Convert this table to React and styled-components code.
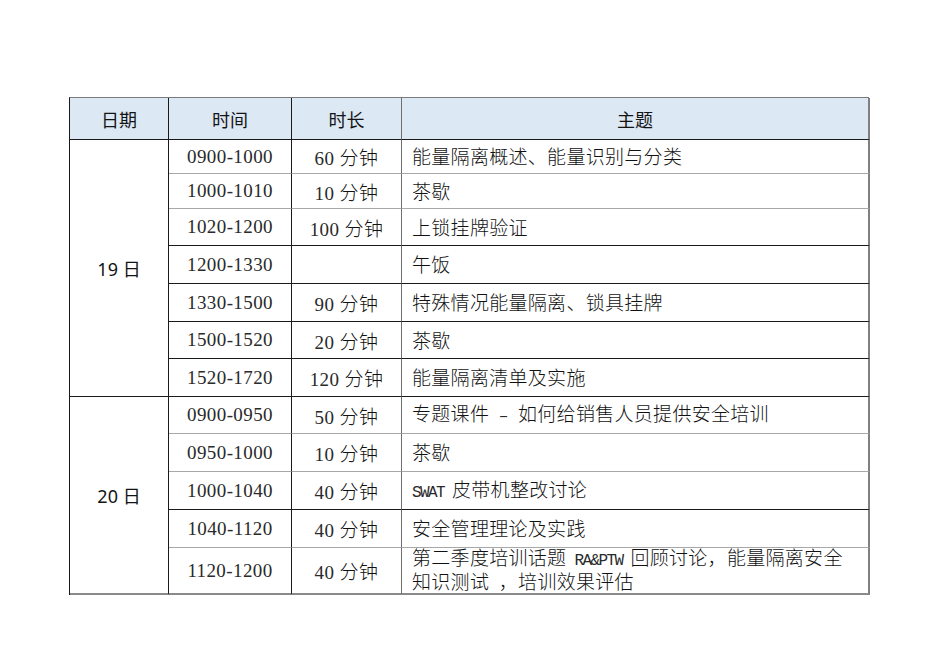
import React from 'react'
import styled, { createGlobalStyle } from 'styled-components'

const GlobalStyle = createGlobalStyle`
  html, body {
    margin: 0;
    padding: 0;
    background: #fff;
  }
`

const Page = styled.div`
  width: 950px;
  height: 658px;
  padding: 97px 0 0 69px;
  box-sizing: border-box;
`

const Grid = styled.div`
  display: grid;
  grid-template-columns: 99px 123px 110px 468px;
  grid-template-rows: ${(p) => p.rows};
  width: 800px;
  box-sizing: border-box;
  border-left: 1px solid #1a1a1a;
  border-top: 1px solid #7a7a7a;
  color: #111;
`

const Cell = styled.div`
  box-sizing: border-box;
  display: flex;
  align-items: center;
  justify-content: ${(p) => (p.left ? 'flex-start' : 'center')};
  padding: ${(p) => (p.left ? '0 16px 0 10px' : '0')};
  border-right: ${(p) => (p.last ? '2px solid #808080' : p.soft ? '1px solid #6e6e6e' : '1px solid #1a1a1a')};
  border-bottom: ${(p) => (p.bottom ? '2px solid #8a8a8a' : `1px solid ${p.line}`)};
  grid-row: ${(p) => p.span || 'auto'};
  overflow: hidden;
`

const HeadCell = styled(Cell)`
  background: #dde8f5;
  font-family: "Noto Sans CJK SC", "Noto Sans", sans-serif;
  font-size: 18px;
  font-weight: 400;
  color: #141414;
  border-bottom: 1px solid #1a1a1a;
`

const DateCell = styled(Cell)`
  font-family: "Noto Sans", "Noto Sans CJK SC", sans-serif;
  font-size: 18px;
  font-weight: 400;
  color: #141414;
`

const SerifText = styled.span`
  font-family: "Liberation Serif", "Noto Sans CJK SC", serif;
  font-size: 19px;
  letter-spacing: 0.4px;
  color: #2a2a2a;
  white-space: nowrap;
`

const CjkText = styled.span`
  font-family: "Noto Sans CJK SC", sans-serif;
  font-weight: 300;
  color: #111;
`

const LatinText = styled.span`
  font-family: "Liberation Mono", monospace;
  font-size: 16px;
  letter-spacing: ${(p) => (p.$word ? '-1.6px' : '0')};
  color: #2a2a2a;
  white-space: pre;
`

const Topic = styled.div`
  font-size: 19px;
  line-height: 19px;
  letter-spacing: 0.3px;
`

const GRAY = '#a8a8a8'
const BLACK = '#1a1a1a'

// rows: time, duration, topic, bottom line colour, row height
const day19 = [
  ['0900-1000', '60', '能量隔离概述、能量识别与分类', GRAY, 34],
  ['1000-1010', '10', '茶歇', GRAY, 35],
  ['1020-1200', '100', '上锁挂牌验证', BLACK, 37],
  ['1200-1330', '', '午饭', BLACK, 38],
  ['1330-1500', '90', '特殊情况能量隔离、锁具挂牌', BLACK, 38],
  ['1500-1520', '20', '茶歇', BLACK, 37],
  ['1520-1720', '120', '能量隔离清单及实施', BLACK, 38],
]

const day20 = [
  ['0900-0950', '50', '专题课件 – 如何给销售人员提供安全培训', GRAY, 37],
  ['0950-1000', '10', '茶歇', GRAY, 38],
  ['1000-1040', '40', 'SWAT 皮带机整改讨论', BLACK, 38],
  ['1040-1120', '40', '安全管理理论及实践', GRAY, 38],
  ['1120-1200', '40', '第二季度培训话题 RA&PTW 回顾讨论，能量隔离安全知识测试 ，培训效果评估', 'bottom', 47],
]

const CJK = /[\u4e00-\u9fff\u3001\uff0c]/

const renderTopic = (text) => {
  // Chinese runs in the CJK sans, Latin words and dashes in a narrow mono face
  const parts = text.split(/([\u4e00-\u9fff\u3001\uff0c]+)/).filter(Boolean)
  return parts.map((p, i) =>
    CJK.test(p) ? (
      <CjkText key={i}>{p}</CjkText>
    ) : (
      <LatinText key={i} $word={/[A-Za-z]/.test(p)}>
        {p}
      </LatinText>
    )
  )
}

const Duration = ({ value }) =>
  value ? (
    <SerifText>
      {value} <CjkText>分钟</CjkText>
    </SerifText>
  ) : null

const DayRows = ({ label, rows, startRow }) => (
  <>
    <DateCell line={BLACK} bottom={rows[rows.length - 1][3] === 'bottom'} span={`${startRow} / span ${rows.length}`}>
      {label}
    </DateCell>
    {rows.map(([time, dur, topic, line]) => {
      const bottom = line === 'bottom'
      return (
        <React.Fragment key={time}>
          <Cell line={line} bottom={bottom}>
            <SerifText>{time}</SerifText>
          </Cell>
          <Cell line={line} bottom={bottom} soft>
            <Duration value={dur} />
          </Cell>
          <Cell line={line} bottom={bottom} left last>
            <Topic>{renderTopic(topic)}</Topic>
          </Cell>
        </React.Fragment>
      )
    })}
  </>
)

const App = () => {
  const heights = [42, ...day19.map((r) => r[4]), ...day20.map((r) => r[4])]
  return (
    <>
      <GlobalStyle />
      <Page>
        <Grid rows={heights.map((h) => `${h}px`).join(' ')}>
          <HeadCell>日期</HeadCell>
          <HeadCell>时间</HeadCell>
          <HeadCell soft>时长</HeadCell>
          <HeadCell last>主题</HeadCell>
          <DayRows label="19 日" rows={day19} startRow={2} />
          <DayRows label="20 日" rows={day20} startRow={2 + day19.length} />
        </Grid>
      </Page>
    </>
  )
}

export default App
